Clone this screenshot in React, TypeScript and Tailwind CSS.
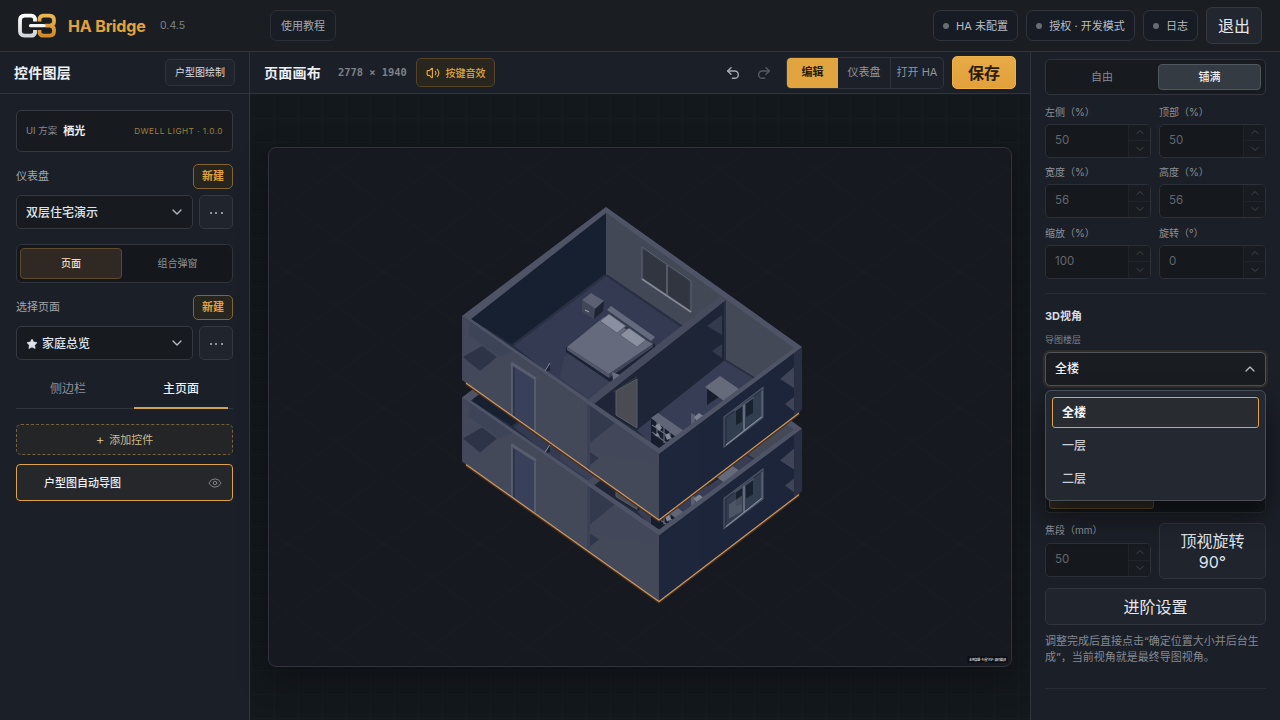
import React, { useState } from 'react';
import clsx from 'clsx';
import { ChevronDown, ChevronUp, Eye, Redo2, Star, Undo2, Volume2 } from 'lucide-react';

const FLOORS = ['全楼', '一层', '二层'];

function Logo() {
  return (
    <svg width="39" height="26" viewBox="0 0 39 26" fill="none" strokeWidth="3.800">
      <defs>
        <linearGradient id="logoWhite" x1="0" y1="0" x2="0" y2="1">
          <stop offset="0" stopColor="#ffffff" />
          <stop offset="1" stopColor="#d3d6db" />
        </linearGradient>
        <linearGradient id="logoAmber" x1="0" y1="0" x2="0" y2="1">
          <stop offset="0" stopColor="#eab553" />
          <stop offset="1" stopColor="#d48a2a" />
        </linearGradient>
      </defs>
      <path d="M17 8.500V5.500Q16 2.700 13 2.700H6.500Q2.200 3 2 7V18.500Q2.200 22.500 6.500 22.700H13Q16 22.700 17 20V17" stroke="url(#logoWhite)" />
      <path d="M21.500 8.500V5.500Q22.500 2.700 25.500 2.700H31.500Q36 3 36 7V8.500Q36 12.200 32 12.700Q36 13.200 36 17V18.500Q36 22.500 31.500 22.700H25.500Q22.500 22.700 21.500 20V17M27 12.700H33" stroke="url(#logoAmber)" />
      <path d="M12.500 12.700H26" stroke="#1a1e23" strokeWidth="5" />
      <path d="M12.500 12.700H26" stroke="#f5f6f8" strokeWidth="3.200" strokeLinecap="round" />
    </svg>
  );
}

function StatusButton({ label, className }: { label: string; className: string }) {
  return (
    <button className={clsx('flex h-[31px] items-center justify-center gap-[7px] rounded-[7px] border border-[#30343d] bg-[#171b23] pt-px text-[11px] whitespace-nowrap text-[#b9bdc5]', className)}>
      <span className="h-1.5 w-1.5 rounded-full bg-[#686c73]" />
      {label}
    </button>
  );
}

function TopBar() {
  return (
    <header className="flex h-[52px] shrink-0 items-center border-b border-[#30343c] bg-[#1a1e22] pr-[18px] pl-[18px]">
      <Logo />
      <span className="ml-[11px] w-[81px] text-[16px] font-bold tracking-[-0.01em] whitespace-nowrap text-[#e2a33d]">HA Bridge</span>
      <span className="ml-[11px] w-[26px] pt-px text-[10.5px] text-[#7d828a]">0.4.5</span>
      <button className="ml-[84px] h-[31px] w-[66px] rounded-[7px] border border-[#2b2f38] bg-[#181c23] pt-px text-[11px] text-[#a2a6ae]">使用教程</button>
      <div className="ml-auto flex items-center gap-2">
        <StatusButton label="HA 未配置" className="w-[85px]" />
        <StatusButton label="授权 · 开发模式" className="w-[109px]" />
        <StatusButton label="日志" className="w-[55px]" />
        <button className="h-[37px] w-[56px] rounded-[6px] border border-[#343841] bg-[#22262f] text-[16px] text-[#e4e7ec]">退出</button>
      </div>
    </header>
  );
}

function NewButton() {
  return (
    <button className="h-[25px] w-[40px] rounded-[5px] border border-[#846530] bg-[#27251f] text-[11px] font-bold text-[#e2a33d]">新建</button>
  );
}

function Picker({ children }: { children: React.ReactNode }) {
  return (
    <div className="flex h-[34px] gap-1.5">
      <button className="flex w-[177px] items-center justify-between rounded-[5px] border border-[#343841] bg-[#171b20] pr-[7px] pl-[9px] text-[12px] font-medium text-[#dfe3e9]">
        <span className="flex items-center gap-1 pt-px">{children}</span>
        <ChevronDown size={16} strokeWidth={2} className="text-[#b4b8c0]" />
      </button>
      <button className="flex w-[34px] items-center justify-center gap-[3.500px] rounded-[5px] border border-[#343841] bg-[#20242d] pt-[2px]">
        {[0, 1, 2].map((i) => (
          <span key={i} className="h-[2px] w-[2px] rounded-full bg-[#b4b8c0]" />
        ))}
      </button>
    </div>
  );
}

function LayerPanel() {
  return (
    <aside className="flex w-[250px] shrink-0 flex-col border-r border-[#30343c] bg-[#1b1f27]">
      <div className="flex h-[42px] shrink-0 items-center justify-between border-b border-[#30343c] pr-[14px] pl-[14px]">
        <h2 className="text-[14px] font-bold tracking-[0.02em] text-[#eceff3]">控件图层</h2>
        <button className="h-[27px] w-[70px] rounded-[5px] border border-[#30343d] bg-[#1f232c] text-[10px] text-[#d9dce2]">户型图绘制</button>
      </div>

      <div className="flex flex-col px-4 pt-4">
        <div className="flex h-[42px] items-center rounded-[5px] border border-[#343841] bg-[#171b20] px-[9px]">
          <span className="text-[9.5px] text-[#858991]">UI 方案</span>
          <span className="ml-[6px] text-[11px] font-bold text-[#eceff3]">栖光</span>
          <span className="ml-auto text-[8.2px] tracking-[0.06em] whitespace-nowrap text-[#a17f3a]">DWELL LIGHT · 1.0.0</span>
        </div>

        <div className="mt-3 mb-[6px] flex h-[25px] items-center justify-between text-[11px] text-[#a2a6ae]">
          仪表盘
          <NewButton />
        </div>
        <Picker>双层住宅演示</Picker>

        <div className="mt-[15px] grid h-[39px] grid-cols-[102px_1fr] gap-x-1 rounded-[6px] border border-[#30343d] bg-[#14181c] p-[3px] text-[10px]">
          <button className="rounded-[4px] border border-[#5d4a2c] bg-[#302923] font-medium text-[#f3dfbb]">页面</button>
          <button className="text-[#8b8f97]">组合弹窗</button>
        </div>

        <div className="mt-3 mb-[6px] flex h-[25px] items-center justify-between text-[11px] text-[#a2a6ae]">
          选择页面
          <NewButton />
        </div>
        <Picker>
          <Star size={12} fill="currentColor" strokeWidth={1} />
          家庭总览
        </Picker>

        <div className="mt-[9px] flex h-[40px] border-b border-[#30343c] text-[12px]">
          <button className="h-[39px] w-[104px] pt-px text-[#8b8f97]">侧边栏</button>
          <button className="ml-[14px] h-[40px] w-[94px] border-b-2 border-[#d2a14b] pt-[2px] font-medium text-[#eceff3]">主页面</button>
        </div>

        <button className="mt-[15px] flex h-[31px] items-center justify-center gap-[5px] rounded-[5px] border border-dashed border-[#75623e] bg-[#242526] text-[11px] text-[#cdb98f]">
          <span className="text-[13px] leading-none">+</span>
          <span className="pt-px">添加控件</span>
        </button>
        <div className="mt-[9px] flex h-[37px] items-center rounded-[4px] border border-[#dda344] bg-[#25272a] pr-[10px] pl-[27px]">
          <span className="pt-px text-[11px] font-medium text-[#eceff3]">户型图自动导图</span>
          <Eye size={14} strokeWidth={1.6} className="ml-auto text-[#85888d]" />
        </div>
      </div>
    </aside>
  );
}

function Window({ x, y, w, h, slope }: { x: number; y: number; w: number; h: number; slope: number }) {
  const dy = w * slope;
  return (
    <g transform={`translate(${x} ${y})`}>
      <path d={`M-1 0L${w} ${dy - 1}V${dy + h}L-1 ${h + 1}Z`} fill="#2b3447" stroke="#4c5568" strokeWidth="1.200" />
      <path d={`M2 1L${w - 2} ${dy + 3}V${dy + h - 2}L2 ${h - 3}Z`} fill="#323e50" />
      <path d={`M1 ${h - 1}L${w - 1} ${dy + h - 1}M${w / 2} ${dy / 2 + 1}V${dy / 2 + h - 1}`} stroke="#818b9b" strokeWidth="1.200" />
      <path d={`M${w - 1} ${dy + 2}V${dy + h - 1}`} stroke="#6d7788" strokeWidth="1" />
    </g>
  );
}

function Storey({ upper }: { upper?: boolean }) {
  return (
    <g>
      {/* back walls and floor */}
      <path d="M606 207L802 347L799 413L659 520L466 383L462 316Z" fill="#252d40" />
      <path d="M606 213V275L513 345L471 319Z" fill="#172031" />
      <path d="M606 213L797 348L755 379L606 275Z" fill="#434857" />
      <path d="M606 275L690 332L588 405L513 345Z" fill="#343a51" />
      <path d="M606 275L513 345M606 275L684 328" stroke="#2a3044" strokeWidth="2.500" />
      <path d="M564 357L604 337L640 362L588 398L560 378Z" fill="#3a4056" />

      {/* rear window */}
      <path d="M642 247L691 281V312L642 279Z" fill="#353a48" stroke="#5d6270" strokeWidth="1" />
      <path d="M644 251L689 282V309L644 278Z" fill="#30353f" />
      <path d="M642 279L691 312" stroke="#858995" strokeWidth="1.800" />
      <path d="M667 265V295" stroke="#70747f" strokeWidth="1.200" />

      {/* nightstand */}
      <path d="M582 300L591 293L604 301L595 309Z" fill="#5b6172" />
      <path d="M582 300L595 309L594 319L582 312Z" fill="#414759" />
      <path d="M595 309L604 301L603 311L594 319Z" fill="#1d2434" />
      <path d="M585 310L589 312" stroke="#a8acb8" strokeWidth="1" />

      {/* bed */}
      <path d="M607 310L611 307L655 338V349L650 350L607 316Z" fill="#343b4e" />
      <path d="M607 310L611 306L655 337L651 341Z" fill="#646a7d" />
      <path d="M566 347L609 375L655 343V350L610 382L566 352Z" fill="#1b2233" />
      <path d="M567 347L604 317L653 344L609 374Z" fill="#656b7d" />
      <path d="M567 347L609 374V378L567 350Z" fill="#515769" />
      <path d="M609 374L653 344V347L609 378Z" fill="#3e4558" />
      <path d="M600 321L609 314L626 326L617 333Z" fill="#8b90a1" stroke="#4d5366" strokeWidth=".7" />
      <path d="M620 335L629 328L646 340L637 347Z" fill="#8b90a1" stroke="#4d5366" strokeWidth=".7" />

      {/* partition and second room */}
      <path d="M725 299V360L638 431L590 404Z" fill="#1d2537" />
      <path d="M725 299L797 348L755 379L725 360Z" fill="#444958" />
      <path d="M725 360L757 380L658 451L637 430Z" fill="#373d54" />
      <path d="M707 326L722 315V335ZM712 351L722 344V358Z" fill="#333a4e" />
      <path d="M725 300V360L756 379" stroke="#2a3043" strokeWidth="2" fill="none" />
      <path d="M616 391L637 379V428L616 415Z" fill="#4b4c53" stroke="#5a5e68" strokeWidth="1" />
      <path d="M613 392L637 377" stroke="#343a4b" strokeWidth="1" />

      {/* desk, chair and shelf */}
      <path d="M707 389L719 397L707 405Z" fill="#171e2d" />
      <path d="M705 387L720 376L739 389L724 401Z" fill="#666b7c" />
      <path d="M691 413L695 415V424L691 427Z" fill="#596073" />
      <path d="M694 417L699 413L705 417L697 422Z" fill="#7c8191" />
      <path d="M651 418L676 436L672 446L660 453L651 444Z" fill="#161e2d" />
      <path d="M651 418L658 413L684 431L676 437Z" fill="#606577" />
      <path d="M652 425L674 440M652 432L668 444M657 422V437M664 427V443M670 432V443" stroke="#646a7b" strokeWidth="1.200" />
      <path d="M655 426L659 423L662 428L659 431ZM665 435L669 433L671 438L667 440ZM654 435L658 433L660 437Z" fill="#858a99" />

      {/* outer faces */}
      <path d="M462 316L659 454V520L466 383L462 380Z" fill="#464b5c" fillOpacity=".95" />
      <path d="M463 318L515 353L466 383L463 380Z" fill="#43485a" />
      <path d="M463 357L482 346L497 357L480 371Z" fill="#2d3447" />
      <path d="M470 322L515 351L500 357L468 335Z" fill="#3c4256" fillOpacity=".6" />
      <path d="M590 405L616 422L590 443Z" fill="#343a4e" />
      <path d="M590 452L599 458L590 465Z" fill="#303649" />
      <path d="M616 422L659 454V464L600 454L590 450V443Z" fill="#424759" fillOpacity=".7" />
      <path d="M588.500 402V470" stroke="#3b4155" strokeWidth="2.500" />
      <path d="M512 365L535 380V430L512 416Z" fill="#394059" />
      <path d="M512 416V364M535 380V431" stroke="#646a7b" strokeWidth="1.200" fill="none" />
      <path d="M511 363L536 379" stroke="#585d70" strokeWidth="3" fill="none" />
      <path d="M514 368V416" stroke="#2c3349" strokeWidth="1.500" />
      <path d="M659 454L802 347L799 413L659 520Z" fill="#1c2539" />
      <path d="M659 456L700 426V488L659 520Z" fill="#20293c" fillOpacity=".45" />
      <path d="M794 353L802 347V409L799 413L794 415Z" fill="#293044" />
      <path d="M780 379L794 367V388ZM785 404L794 397V411Z" fill="#3f4557" />

      {/* wall caps */}
      <path d="M606 207L802 347L659 454L462 316ZM606 213L471 319L659 448L794 348Z" fillRule="evenodd" fill="#4e5466" />
      <path d="M720 296L726 300L594 404L587 400Z" fill="#464c5e" />
      <path d="M545 371L550 363V371Z" fill="#1b2335" />
      <path d="M545 371L550 363" stroke="#a1a5b0" strokeWidth=".8" />
      <path d="M612 372L620 375L613 380Z" fill="#6a6f7e" />

      <Window x={725} y={417} w={38} h={29} slope={-0.75} />
      <path d="M736 411L742 407V422L736 425ZM746 404L753 399V413L746 417Z" fill="#18222f" />
      <path d="M734 411L754 397" stroke="#4c5667" strokeWidth="1.500" />
      {!upper && <path d="M729 423L742 414V430L729 437Z" fill="#58606f" fillOpacity=".7" />}
      <path d="M466 384L659 521L799 414" fill="none" stroke="#4a2f1d" strokeWidth="2.200" />
      <path d="M466 383L659 520L799 413" fill="none" stroke="#c99a68" strokeWidth="1.200" />
    </g>
  );
}

function FloorPlan() {
  return (
    <svg className="block h-full w-full" viewBox="269 148 742 518">
      <defs>
        <pattern id="isoGrid" width="96" height="68" patternUnits="userSpaceOnUse">
          <path d="M0 0L96 68M96 0L0 68" stroke="#191c24" strokeWidth=".6" />
        </pattern>
      </defs>
      <rect x="269" y="148" width="742" height="518" fill="url(#isoGrid)" />
      <g transform="translate(0 81.500)">
        <Storey />
      </g>
      <Storey upper />
      <rect x="967.500" y="656.500" width="40" height="6" fill="#0a0b0e" />
      <text x="969" y="660.700" fontSize="3.100" fontWeight="700" fill="#c9cbd0" textLength="37">本地部署 · 行星守护 · 源码编译</text>
    </svg>
  );
}

function Workspace() {
  return (
    <main className="flex min-w-0 flex-1 flex-col">
      <div className="flex h-[42px] shrink-0 items-center border-b border-[#30343c] bg-[#1b1f27] pr-[14px] pl-[14px]">
        <h2 className="w-[58px] text-[14px] font-bold tracking-[0.02em] whitespace-nowrap text-[#eceff3]">页面画布</h2>
        <span className="ml-4 w-[70px] font-['DejaVu_Sans_Mono',monospace] text-[10.4px] font-bold whitespace-nowrap text-[#7d8189]">2778 × 1940</span>
        <button className="ml-[8px] flex h-[29px] w-[79px] items-center justify-center gap-[6px] rounded-[5px] border border-[#554526] bg-[#29261f] text-[10px] font-medium text-[#dfa640]">
          <Volume2 size={14} strokeWidth={2} />
          <span className="pt-px">按键音效</span>
        </button>
        <Undo2 size={16} strokeWidth={2.2} className="ml-auto text-[#a6aab2]" />
        <Redo2 size={16} strokeWidth={2.2} className="ml-[15px] text-[#555961]" />
        <div className="ml-[14px] flex h-[32px] w-[158px] overflow-hidden rounded-[5px] border border-[#30343d] bg-[#1c2028] text-[11px] text-[#92969e]">
          <button className="w-[51px] bg-[#e2a43f] font-bold text-[#2a1c08]">编辑</button>
          <button className="w-[53px] border-r border-[#30343d]">仪表盘</button>
          <button className="flex-1 whitespace-nowrap">打开 HA</button>
        </div>
        <button className="ml-2 h-[33px] w-[64px] rounded-[5px] border border-[#efb04a] bg-gradient-to-b from-[#e6ab47] to-[#e2a03a] text-[16px] font-bold text-[#2a1c08]">保存</button>
      </div>
      <div className="flex-1 bg-[#13181d] bg-[linear-gradient(to_right,#161b20_1px,transparent_1px),linear-gradient(to_bottom,#161b20_1px,transparent_1px)] bg-[size:24px_24px] px-[18px] pt-[53px]">
        <div className="h-[520px] w-[744px] overflow-hidden rounded-[8px] border border-[#2f333b] bg-[#171921] shadow-[0_12px_32px_rgba(0,0,0,0.3)]">
          <FloorPlan />
        </div>
      </div>
    </main>
  );
}

function NumberField({ label, value }: { label: string; value: string }) {
  return (
    <div>
      <div className="mb-[5px] h-[14px] text-[10px] leading-[14px] text-[#8b8f97]">{label}</div>
      <div className="flex h-[34px] overflow-hidden rounded-[5px] border border-[#2c3038] bg-[#15191d] text-[#62666d]">
        <span className="flex flex-1 items-center pl-[9px] text-[11.5px]">{value}</span>
        <div className="flex w-[22px] flex-col border-l border-[#20242a] bg-[#181c20]">
          <span className="flex flex-1 items-center justify-center border-b border-[#20242a] text-[#44484f]">
            <ChevronUp size={12} strokeWidth={2} />
          </span>
          <span className="flex flex-1 items-center justify-center text-[#44484f]">
            <ChevronDown size={12} strokeWidth={2} />
          </span>
        </div>
      </div>
    </div>
  );
}

function FloorSelect() {
  const [open, setOpen] = useState(true);
  const [floor, setFloor] = useState(FLOORS[0]);

  return (
    <div className="relative">
      <button
        onClick={() => setOpen(!open)}
        className="flex h-[34px] w-full items-center justify-between rounded-[5px] border border-[#50535a] bg-[#191d22] pr-[7px] pl-[9px] text-[12px] font-medium text-[#eceff3] shadow-[0_0_0_2px_rgba(226,164,63,0.1)]"
      >
        {floor}
        <ChevronUp size={16} strokeWidth={2} className="text-[#b4b8c0]" />
      </button>
      {open && (
        <div className="absolute top-[38px] left-0 z-10 flex h-[111px] w-full flex-col gap-[2px] rounded-[6px] border border-[#4a4e57] bg-[#242830] p-[6px] shadow-[0_14px_28px_rgba(0,0,0,0.5)]">
          {FLOORS.map((item) => (
            <button
              key={item}
              onClick={() => setFloor(item)}
              className={clsx(
                'h-[31px] rounded-[3px] border pl-[9px] text-left text-[12px]',
                item === floor ? 'border-[#dda344] bg-[#282c31] font-bold text-[#f3f5f8]' : 'border-transparent font-medium text-[#c9cdd4]'
              )}
            >
              {item}
            </button>
          ))}
        </div>
      )}
    </div>
  );
}

function PropertyPanel() {
  return (
    <aside className="flex w-[250px] shrink-0 flex-col border-l border-[#30343c] bg-[#1b1f27] pt-[7px] pr-[14px] pl-[14px]">
      <div className="flex h-[36px] items-center rounded-[5px] border border-[#30343d] bg-[#171b20] pr-1 text-[11px]">
        <button className="w-[112px] text-[#858991]">自由</button>
        <button className="h-[26px] flex-1 rounded-[4px] border border-[#50585f] bg-[#343b42] font-medium text-[#eceff3]">铺满</button>
      </div>

      <div className="mt-[9.500px] grid grid-cols-[106px_107px] gap-x-2 gap-y-[7.500px]">
        <NumberField label="左侧（%）" value="50" />
        <NumberField label="顶部（%）" value="50" />
        <NumberField label="宽度（%）" value="56" />
        <NumberField label="高度（%）" value="56" />
        <NumberField label="缩放（%）" value="100" />
        <NumberField label="旋转（°）" value="0" />
      </div>

      <hr className="mt-[14.500px] border-[#292d34]" />
      <h3 className="mt-[14px] text-[11px] leading-4 font-bold text-[#d9dce2]">3D视角</h3>
      <div className="mt-[9px] mb-[5px] text-[9px] leading-[14px] text-[#7d8189]">导图楼层</div>
      <FloorSelect />

      <div className="mt-[88px] h-[39px] rounded-[5px] border border-[#282c32] bg-[#14181c] p-[3px]">
        <div className="h-full w-[105px] rounded-[3px] border border-[#5d4a2c] bg-[#302923]" />
      </div>

      <div className="mt-[10px] grid grid-cols-[106px_107px] gap-x-2">
        <div className="flex flex-col">
          <div className="mb-[6px] h-[14px] text-[10px] leading-[14px] text-[#8b8f97]">焦段（mm）</div>
          <div className="-mt-[19px]">
            <NumberField label="" value="50" />
          </div>
        </div>
        <button className="h-[56px] rounded-[5px] border border-[#30343d] bg-[#20242d] px-4 pt-[2px] text-[16px] leading-[21px] text-[#dfe3e9]">
          顶视旋转 90°
        </button>
      </div>
      <button className="mt-[9px] h-[37px] shrink-0 rounded-[5px] border border-[#30343d] bg-[#20242d] text-[16px] text-[#e4e7ec]">进阶设置</button>
      <p className="mt-[8px] text-[11px] leading-4 text-[#858991]">调整完成后直接点击“确定位置大小并后台生成”，当前视角就是最终导图视角。</p>
      <hr className="mt-[23px] border-[#292d34]" />
    </aside>
  );
}

export default function App() {
  return (
    <div className="flex h-screen w-screen flex-col overflow-hidden bg-[#13181d] font-['Inter','Noto_Sans_CJK_SC',sans-serif] text-[#dfe3e9]" lang="zh-CN">
      <TopBar />
      <div className="flex min-h-0 flex-1">
        <LayerPanel />
        <Workspace />
        <PropertyPanel />
      </div>
    </div>
  );
}
